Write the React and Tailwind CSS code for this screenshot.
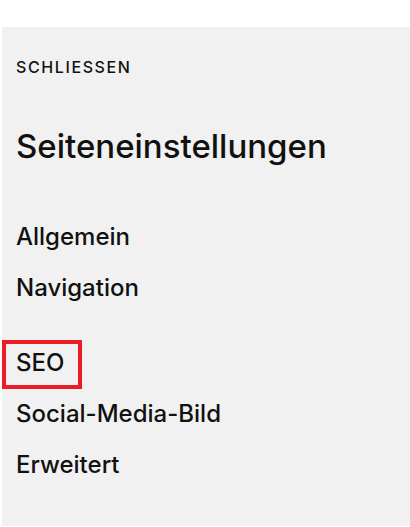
export default function App() {
  const font = { fontFamily: "Inter, 'Liberation Sans', sans-serif" };

  return (
    <div className="w-[410px] h-[527px] bg-white pt-[27px] pl-[2px]" style={font}>
      <div className="h-[499px] bg-[#f1f1f1] px-[14px] pt-[30px] text-[#111111] font-medium">
        <div className="text-[16px] leading-[20px] tracking-[0.1em]">SCHLIESSEN</div>

        <h1 className="mt-[49px] text-[33px] leading-[40px] font-medium">
          Seiteneinstellungen
        </h1>

        <nav className="mt-[45px] flex flex-col text-[24px]">
          <div className="leading-[51px]">Allgemein</div>
          <div className="leading-[51px]">Navigation</div>

          <div className="mt-[27px] -ml-[14px] w-[80px] h-[49px] border-4 border-[#ed1c24] pl-[10px] leading-[37px] pb-[4px]">
            SEO
          </div>

          <div className="-mt-[1px] leading-[51px]">Social-Media-Bild</div>
          <div className="leading-[51px]">Erweitert</div>
        </nav>
      </div>
    </div>
  );
}
